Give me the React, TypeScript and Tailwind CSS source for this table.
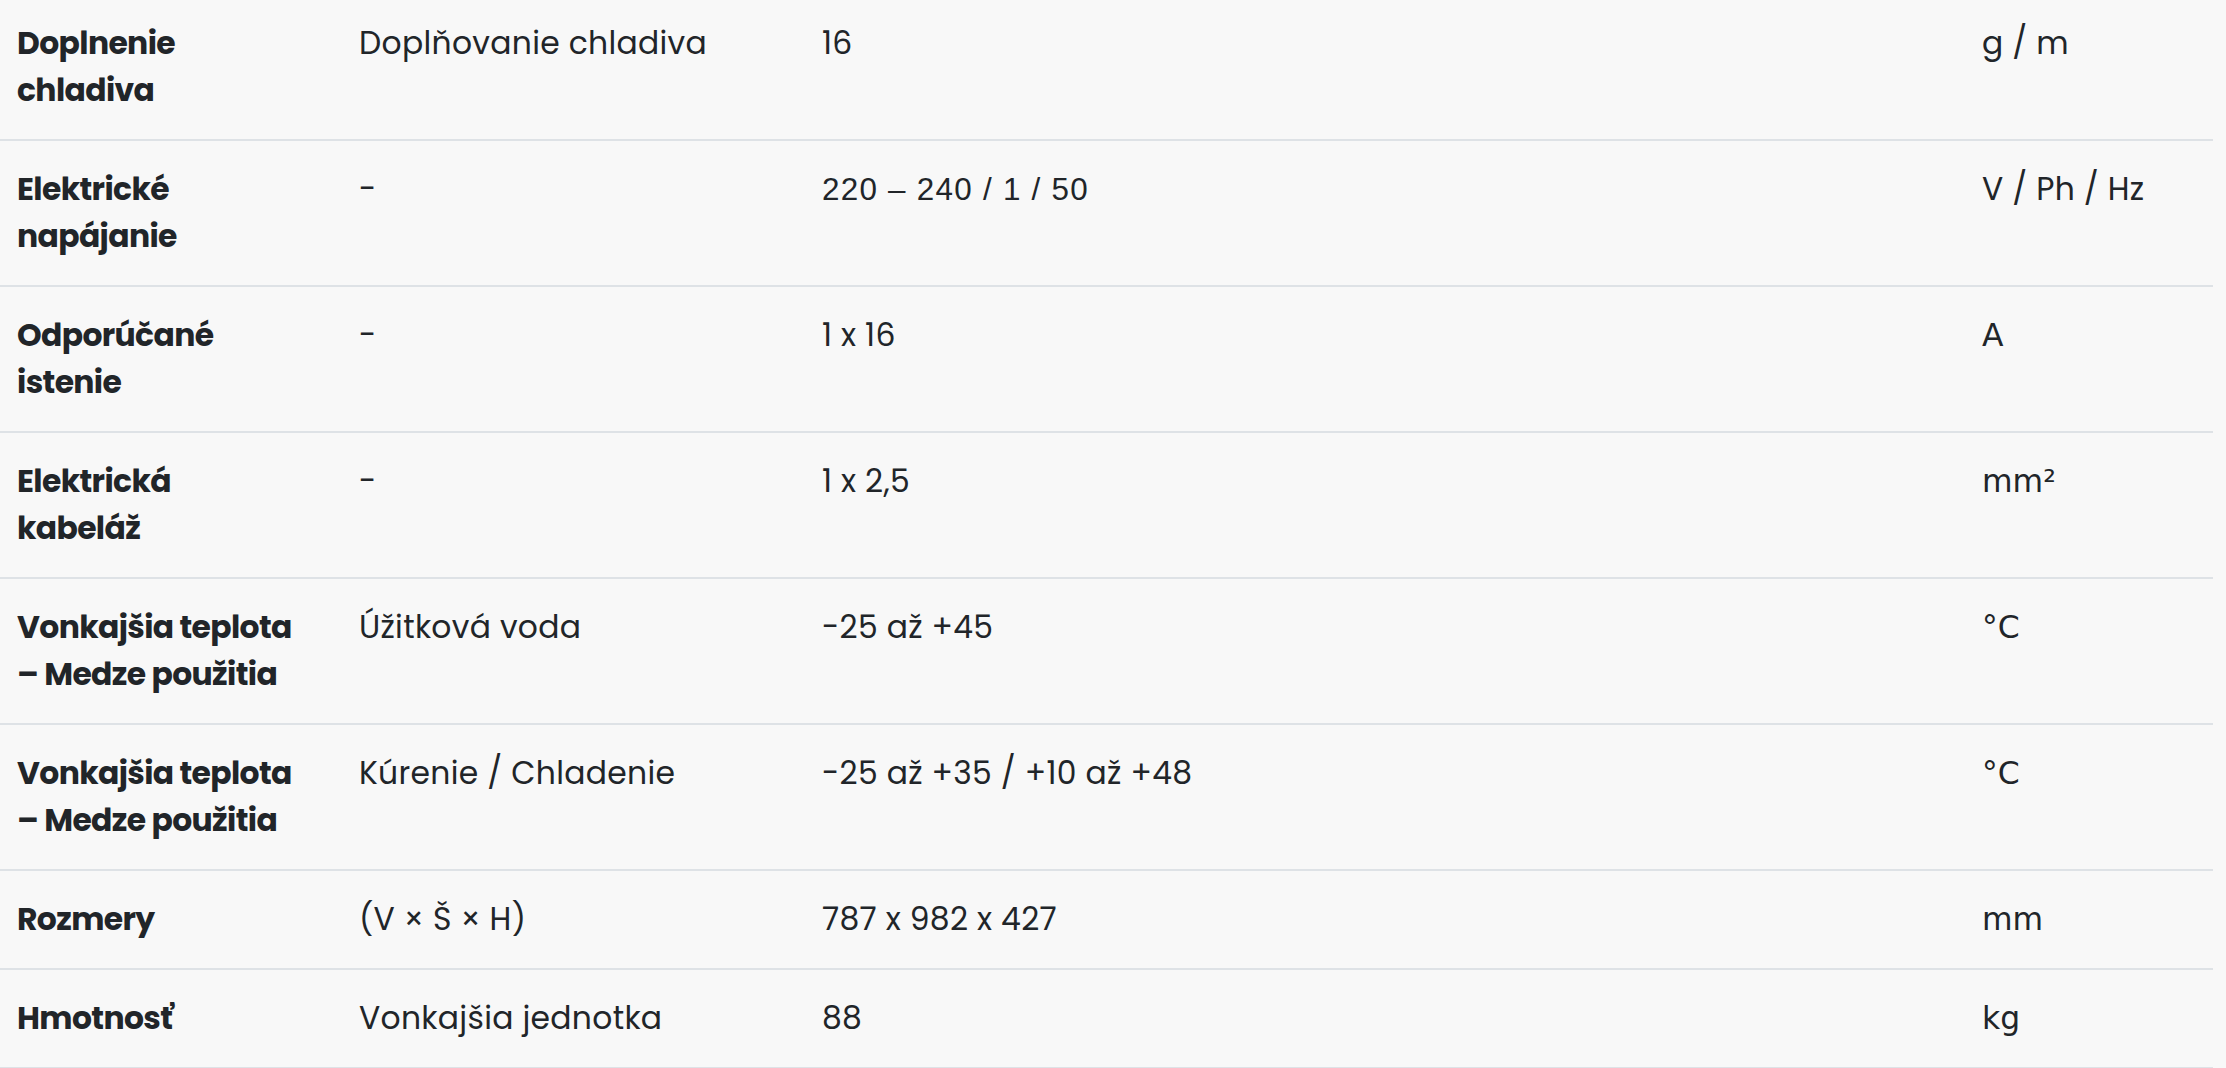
type Row = {
  label: string;
  detail: string;
  value: string;
  unit: string;
  valueArial?: boolean;
  unitFallback?: boolean;
};

const rows: Row[] = [
  { label: "Doplnenie chladiva", detail: "Doplňovanie chladiva", value: "16", unit: "g / m" },
  { label: "Elektrické napájanie", detail: "-", value: "220 – 240 / 1 / 50", unit: "V / Ph / Hz", valueArial: true },
  { label: "Odporúčané istenie", detail: "-", value: "1 x 16", unit: "A", unitFallback: true },
  { label: "Elektrická kabeláž", detail: "-", value: "1 x 2,5", unit: "mm²", unitFallback: true },
  { label: "Vonkajšia teplota – Medze použitia", detail: "Úžitková voda", value: "-25 až +45", unit: "°C", unitFallback: true },
  { label: "Vonkajšia teplota – Medze použitia", detail: "Kúrenie / Chladenie", value: "-25 až +35 / +10 až +48", unit: "°C", unitFallback: true },
  { label: "Rozmery", detail: "(V × Š × H)", value: "787 x 982 x 427", unit: "mm", unitFallback: true },
  { label: "Hmotnosť", detail: "Vonkajšia jednotka", value: "88", unit: "kg", unitFallback: true },
];

const body = "font-['Poppins','Inter',sans-serif] font-normal tracking-[0.01em]";
const arial = "font-['Liberation_Sans',Arial,sans-serif] font-normal tracking-[0.04em]";
const fallback = "font-['DejaVu_Sans',sans-serif] font-normal tracking-normal";

export default function App() {
  return (
    <div className="min-h-screen w-full overflow-hidden bg-[#f8f8f8] text-[#212529]">
      <table className="-mt-[5px] w-[2213px] table-fixed border-collapse text-[31.4px] leading-[47px]">
        <colgroup>
          <col className="w-[342px]" />
          <col className="w-[463px]" />
          <col className="w-[1160px]" />
          <col className="w-[248px]" />
        </colgroup>
        <tbody>
          {rows.map((r, i) => (
            <tr key={i} className="border-b-2 border-[#dee2e6] align-top">
              <th className="py-[25px] pl-[17px] text-left font-['Poppins','Inter',sans-serif] font-bold tracking-[-0.02em]">
                <div className="max-w-[279px]">{r.label}</div>
              </th>
              <td className={`py-[25px] pl-[17px] ${body}`}>{r.detail}</td>
              <td className={`py-[25px] pl-[17px] ${r.valueArial ? arial : body}`}>{r.value}</td>
              <td className={`py-[25px] pl-[17px] ${r.unitFallback ? fallback : body}`}>{r.unit}</td>
            </tr>
          ))}
        </tbody>
      </table>
    </div>
  );
}
